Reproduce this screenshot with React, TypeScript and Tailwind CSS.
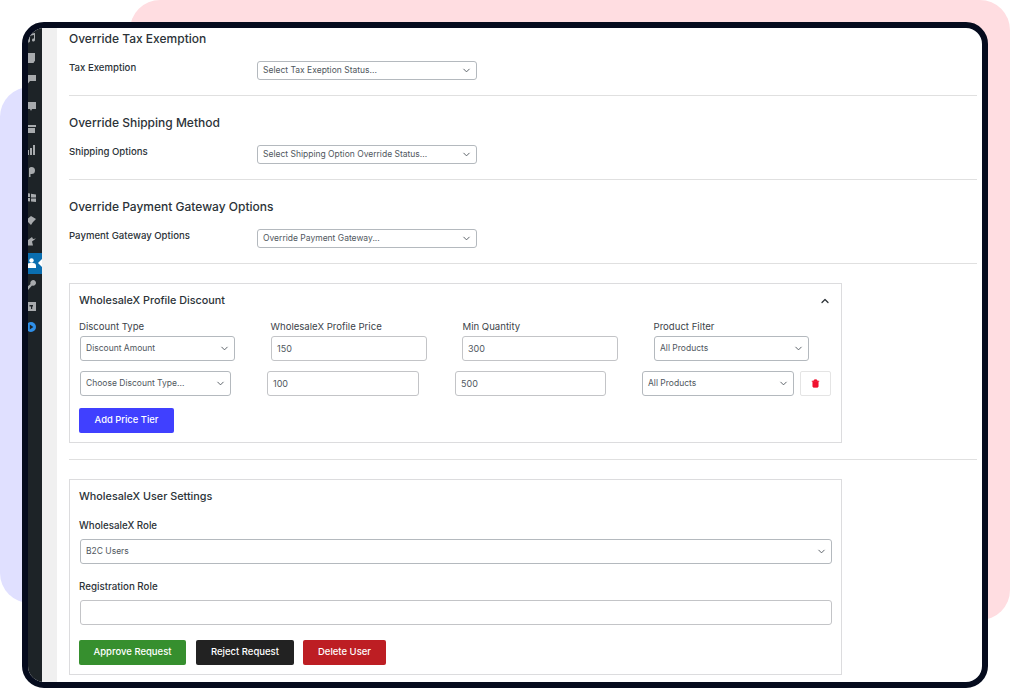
import { ChevronDown, ChevronUp, Trash2 } from "lucide-react";

const ink = "text-[#2c3338]";

// wp admin menu icons, the column is cut off on the left like in the screenshot
const sidebarIcons = [
    { top: 5, d: "M3 1l6-1v7a1.5 1.5 0 1 1-1-1.4V2L4 2.7V8a1.5 1.5 0 1 1-1-1.4z" },
    { top: 25, d: "M1 0h8v7.5L7.5 10H1z" },
    { top: 46, d: "M0 1h10v6H4l-2.5 3V7H0z" },
    { top: 73, d: "M0 1h10v7H6l-1 2-1-2H0z" },
    { top: 96, d: "M0 1h10v2H0zM1 4h8v5H1z" },
    { top: 117, d: "M1 5h2v5H1zM4 3h2v7H4zM7 0h2v10H7z" },
    { top: 139, d: "M5.5 0a3.5 3.5 0 0 1 0 7H4.5v3H3V1.2A3.5 3.5 0 0 1 5.5 0z" },
    { top: 164, d: "M0 1l4 .6V5H0zM5 1.7l5 .8V5.5H5zM0 6h4v3.4L0 9zM5 6.5h5V10l-5-.5z" },
    { top: 187, d: "M0 5l5-4 5 3-3 3-2 3z" },
    { top: 208, d: "M0 5.5L6 1l1 2 3-.5-4 3L7 9.5H2z" },
    { top: 252, d: "M7 0a3 3 0 0 1 2.8 4A3 3 0 0 1 6 5.5L2 10 0 8l4.5-4A3 3 0 0 1 7 0z" },
    { top: 273, d: "M0 1h10v9H0zM3.5 4v1.5H5V8h1.2V5.5H7V4z" },
];

const Sidebar = () => (
    <div className="relative w-[14px] shrink-0 overflow-hidden bg-[#1d2327]">
        {sidebarIcons.map((icon) => (
            <svg
                key={icon.top}
                viewBox="0 0 10 10"
                style={{ top: icon.top }}
                className="absolute left-[-2px] h-[10px] w-[10px] text-[#a7aaad]"
            >
                <path d={icon.d} fill="currentColor" fillRule="evenodd" />
            </svg>
        ))}
        <div className="absolute left-0 top-[225px] h-[21px] w-[14px] bg-[#0a6eb0]">
            <svg viewBox="0 0 10 10" className="absolute left-[-1px] top-[5px] h-[10px] w-[10px] text-white">
                <circle cx="4.5" cy="2.5" r="2.2" fill="currentColor" />
                <path d="M0 10V8a3 3 0 0 1 3-3h3a3 3 0 0 1 3 3v2z" fill="currentColor" />
            </svg>
            <div className="absolute right-0 top-[6px] h-0 w-0 border-y-[4px] border-r-[4px] border-y-transparent border-r-white" />
        </div>
        <svg viewBox="0 0 10 10" className="absolute left-[-2px] top-[294px] h-[10px] w-[10px]">
            <circle cx="5" cy="5" r="5" fill="#2f8fe8" />
            <path d="M3.8 2.6L7.4 5 3.8 7.4z" fill="#1d2327" />
        </svg>
    </div>
);

type SelectBoxProps = {
    label: string;
    className: string;
};

const SelectBox = ({ label, className }: SelectBoxProps) => (
    <div
        className={`flex items-center justify-between rounded-[3px] border border-[#b4b9be] bg-white pl-[5px] pr-[4px] text-[8.5px] text-[#50575e] ${className}`}
    >
        <span>{label}</span>
        <ChevronDown className="h-[11px] w-[11px] text-[#50575e]" strokeWidth={2} />
    </div>
);

type TextBoxProps = {
    value?: string;
    className: string;
};

const TextBox = ({ value, className }: TextBoxProps) => (
    <div
        className={`flex items-center rounded-[3px] border border-[#c3c4c7] bg-white pl-[5px] text-[9px] text-[#50575e] ${className}`}
    >
        {value}
    </div>
);

type OverrideSectionProps = {
    title: string;
    label: string;
    placeholder: string;
    className: string;
};

const OverrideSection = ({ title, label, placeholder, className }: OverrideSectionProps) => (
    <section className={`border-b border-[#e0e0e0] ${className}`}>
        <h2 className={`text-[12px] font-medium leading-[16px] ${ink}`}>{title}</h2>
        <div className="mt-[13px] flex items-start">
            <p className={`w-[188px] pt-[1px] text-[9.6px] font-medium leading-[14px] ${ink}`}>{label}</p>
            <SelectBox label={placeholder} className="mt-[1px] h-[19px] w-[220px]" />
        </div>
    </section>
);

type ActionButtonProps = {
    label: string;
    className: string;
};

const ActionButton = ({ label, className }: ActionButtonProps) => (
    <button className={`h-[25px] rounded-[2px] text-[9.5px] font-medium text-white ${className}`}>{label}</button>
);

const App = () => {
    return (
        <div className="relative h-[689px] w-[1010px] overflow-hidden bg-white font-['Inter',sans-serif]">
            <div className="absolute left-[130px] top-0 h-[620px] w-[880px] rounded-[30px] bg-[#ffdde1]" />
            <div className="absolute left-0 top-[87px] h-[516px] w-[200px] rounded-[30px] bg-[#e0e0ff]" />

            <div className="absolute left-[22px] top-[22px] flex h-[666px] w-[966px] overflow-hidden rounded-[22px] border-[6px] border-[#050b1d] bg-white">
                <Sidebar />
                <div className="w-[15px] shrink-0 bg-[#f0f0f0]" />

                <main className="min-w-0 flex-1 pl-[12px] pr-[5px]">
                    <OverrideSection
                        title="Override Tax Exemption"
                        label="Tax Exemption"
                        placeholder="Select Tax Exeption Status..."
                        className="h-[68px] pt-[3px]"
                    />
                    <OverrideSection
                        title="Override Shipping Method"
                        label="Shipping Options"
                        placeholder="Select Shipping Option Override Status..."
                        className="h-[84px] pt-[19px]"
                    />
                    <OverrideSection
                        title="Override Payment Gateway Options"
                        label="Payment Gateway Options"
                        placeholder="Override Payment Gateway..."
                        className="h-[84px] pt-[19px]"
                    />

                    <div className="border-b border-[#e0e0e0] pb-[16px] pt-[19px]">
                        <section className="h-[160px] w-[773px] border border-[#dcdcde] px-[9px] pt-[10px]">
                            <div className="flex items-center justify-between pr-[1px]">
                                <h3 className={`text-[10.8px] font-medium leading-[14px] ${ink}`}>WholesaleX Profile Discount</h3>
                                <ChevronUp className="h-[12px] w-[12px] text-[#2c3338]" strokeWidth={2.5} />
                            </div>
                            <div className="mt-[13px] flex text-[9.6px] leading-[12px] text-[#3c434a]">
                                <span className="w-[191.5px]">Discount Type</span>
                                <span className="w-[192px]">WholesaleX Profile Price</span>
                                <span className="w-[191px]">Min Quantity</span>
                                <span>Product Filter</span>
                            </div>
                            <div className="mt-[3px] flex pl-[1px]">
                                <SelectBox label="Discount Amount" className="h-[25px] w-[155px]" />
                                <TextBox value="150" className="ml-[36px] h-[25px] w-[156px]" />
                                <TextBox value="300" className="ml-[35px] h-[25px] w-[156px]" />
                                <SelectBox label="All Products" className="ml-[36px] h-[25px] w-[155px]" />
                            </div>
                            <div className="mt-[10px] flex pl-[1px]">
                                <SelectBox label="Choose Discount Type..." className="h-[25px] w-[151px]" />
                                <TextBox value="100" className="ml-[36px] h-[25px] w-[152px]" />
                                <TextBox value="500" className="ml-[36px] h-[25px] w-[151px]" />
                                <SelectBox label="All Products" className="ml-[36px] h-[25px] w-[152px] border-[#8c8f94]" />
                                <div className="ml-[6px] flex h-[25px] w-[31px] items-center justify-center rounded-[2px] border border-[#e4e4e4]">
                                    <Trash2 className="h-[9px] w-[9px] fill-[#f0102f] text-[#f0102f]" strokeWidth={2} />
                                </div>
                            </div>
                            <button className="mt-[12px] h-[25px] w-[95px] rounded-[2px] bg-[#4040ff] text-[9.4px] font-medium text-white">
                                Add Price Tier
                            </button>
                        </section>
                    </div>

                    <section className="mt-[19px] h-[196px] w-[773px] border border-[#dcdcde] px-[9px] pt-[10px]">
                        <h3 className={`text-[10.8px] font-medium leading-[14px] ${ink}`}>WholesaleX User Settings</h3>
                        <p className={`mt-[16px] text-[9.75px] font-medium leading-[12px] ${ink}`}>WholesaleX Role</p>
                        <SelectBox label="B2C Users" className="ml-[1px] mt-[7px] h-[25px] w-[752px]" />
                        <p className={`mt-[17px] text-[9.75px] font-medium leading-[12px] ${ink}`}>Registration Role</p>
                        <TextBox className="ml-[1px] mt-[7px] h-[25px] w-[752px] border-[#b4b9be]" />
                        <div className="mt-[15px] flex">
                            <ActionButton label="Approve Request" className="w-[107px] bg-[#368f2e]" />
                            <ActionButton label="Reject Request" className="ml-[10px] w-[98px] bg-[#222222]" />
                            <ActionButton label="Delete User" className="ml-[9px] w-[83px] bg-[#bd1e23]" />
                        </div>
                    </section>
                </main>
            </div>
        </div>
    );
};

export default App;
